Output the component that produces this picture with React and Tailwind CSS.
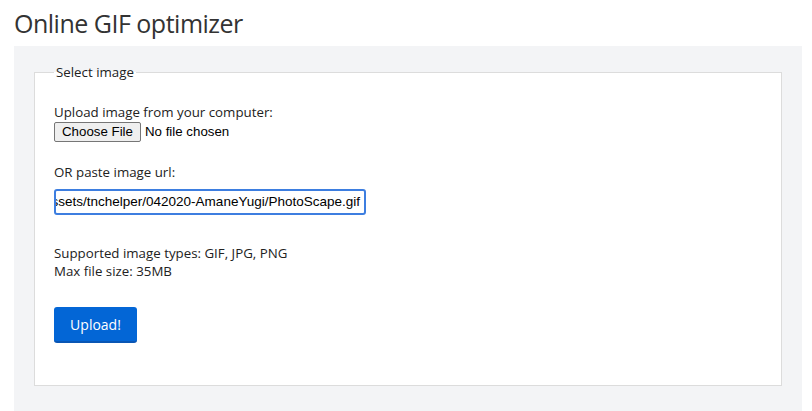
export default function App() {
  const sans = { fontFamily: '"Open Sans", "Noto Sans", sans-serif' };
  return (
    <div className="w-[812px] h-[411px] bg-white overflow-hidden" style={sans}>
      <h1 className="text-[25px] leading-[46px] h-[46px] pl-[14px] text-[#333] font-normal tracking-[-0.5px]">
        Online GIF optimizer
      </h1>
      <div className="ml-[14px] w-[788px] h-[365px] bg-[#f3f4f6] pt-[17px] px-[20px]">
        <fieldset className="border border-[#dcdcdc] bg-white px-[19px] pb-[42px] m-0 min-w-0">
          <legend className="px-[2px] text-[13.3px] leading-[18px] text-[#222] font-medium">Select image</legend>
          <div className="mt-[22px] text-[13.3px] leading-[18px] text-[#222]">Upload image from your computer:</div>
          <div className="flex items-center mt-px h-[20px]" style={{ fontFamily: '"Liberation Sans", Arial, sans-serif' }}>
            <button className="h-[20px] border border-[#767676] rounded-[2px] bg-[#efefef] px-[7px] text-[13.3px] leading-[18px] text-black">
              Choose File
            </button>
            <span className="ml-[4px] text-[13.3px] text-black">No file chosen</span>
          </div>
          <div className="mt-[21px] text-[13.3px] leading-[18px] text-[#222]">OR paste image url:</div>
          <div
            className="mt-[8px] w-[312px] h-[26px] border-2 border-[#3d7ee0] rounded-[3px] flex items-center justify-end overflow-hidden whitespace-nowrap pr-[4px] text-[13.5px] text-black"
            style={{ fontFamily: '"Liberation Sans", Arial, sans-serif' }}
          >
            https://cdn.example.com/assets/tnchelper/042020-AmaneYugi/PhotoScape.gif
          </div>
          <div className="mt-[29px] text-[13.3px] leading-[18px] text-[#222]">
            Supported image types: GIF, JPG, PNG
            <br />
            Max file size: 35MB
          </div>
          <button className="mt-[27px] w-[83px] h-[36px] bg-[#0366d6] border-b-2 border-[#0a56b4] rounded-[3px] text-white text-[14px] font-medium">
            Upload!
          </button>
        </fieldset>
      </div>
    </div>
  );
}
